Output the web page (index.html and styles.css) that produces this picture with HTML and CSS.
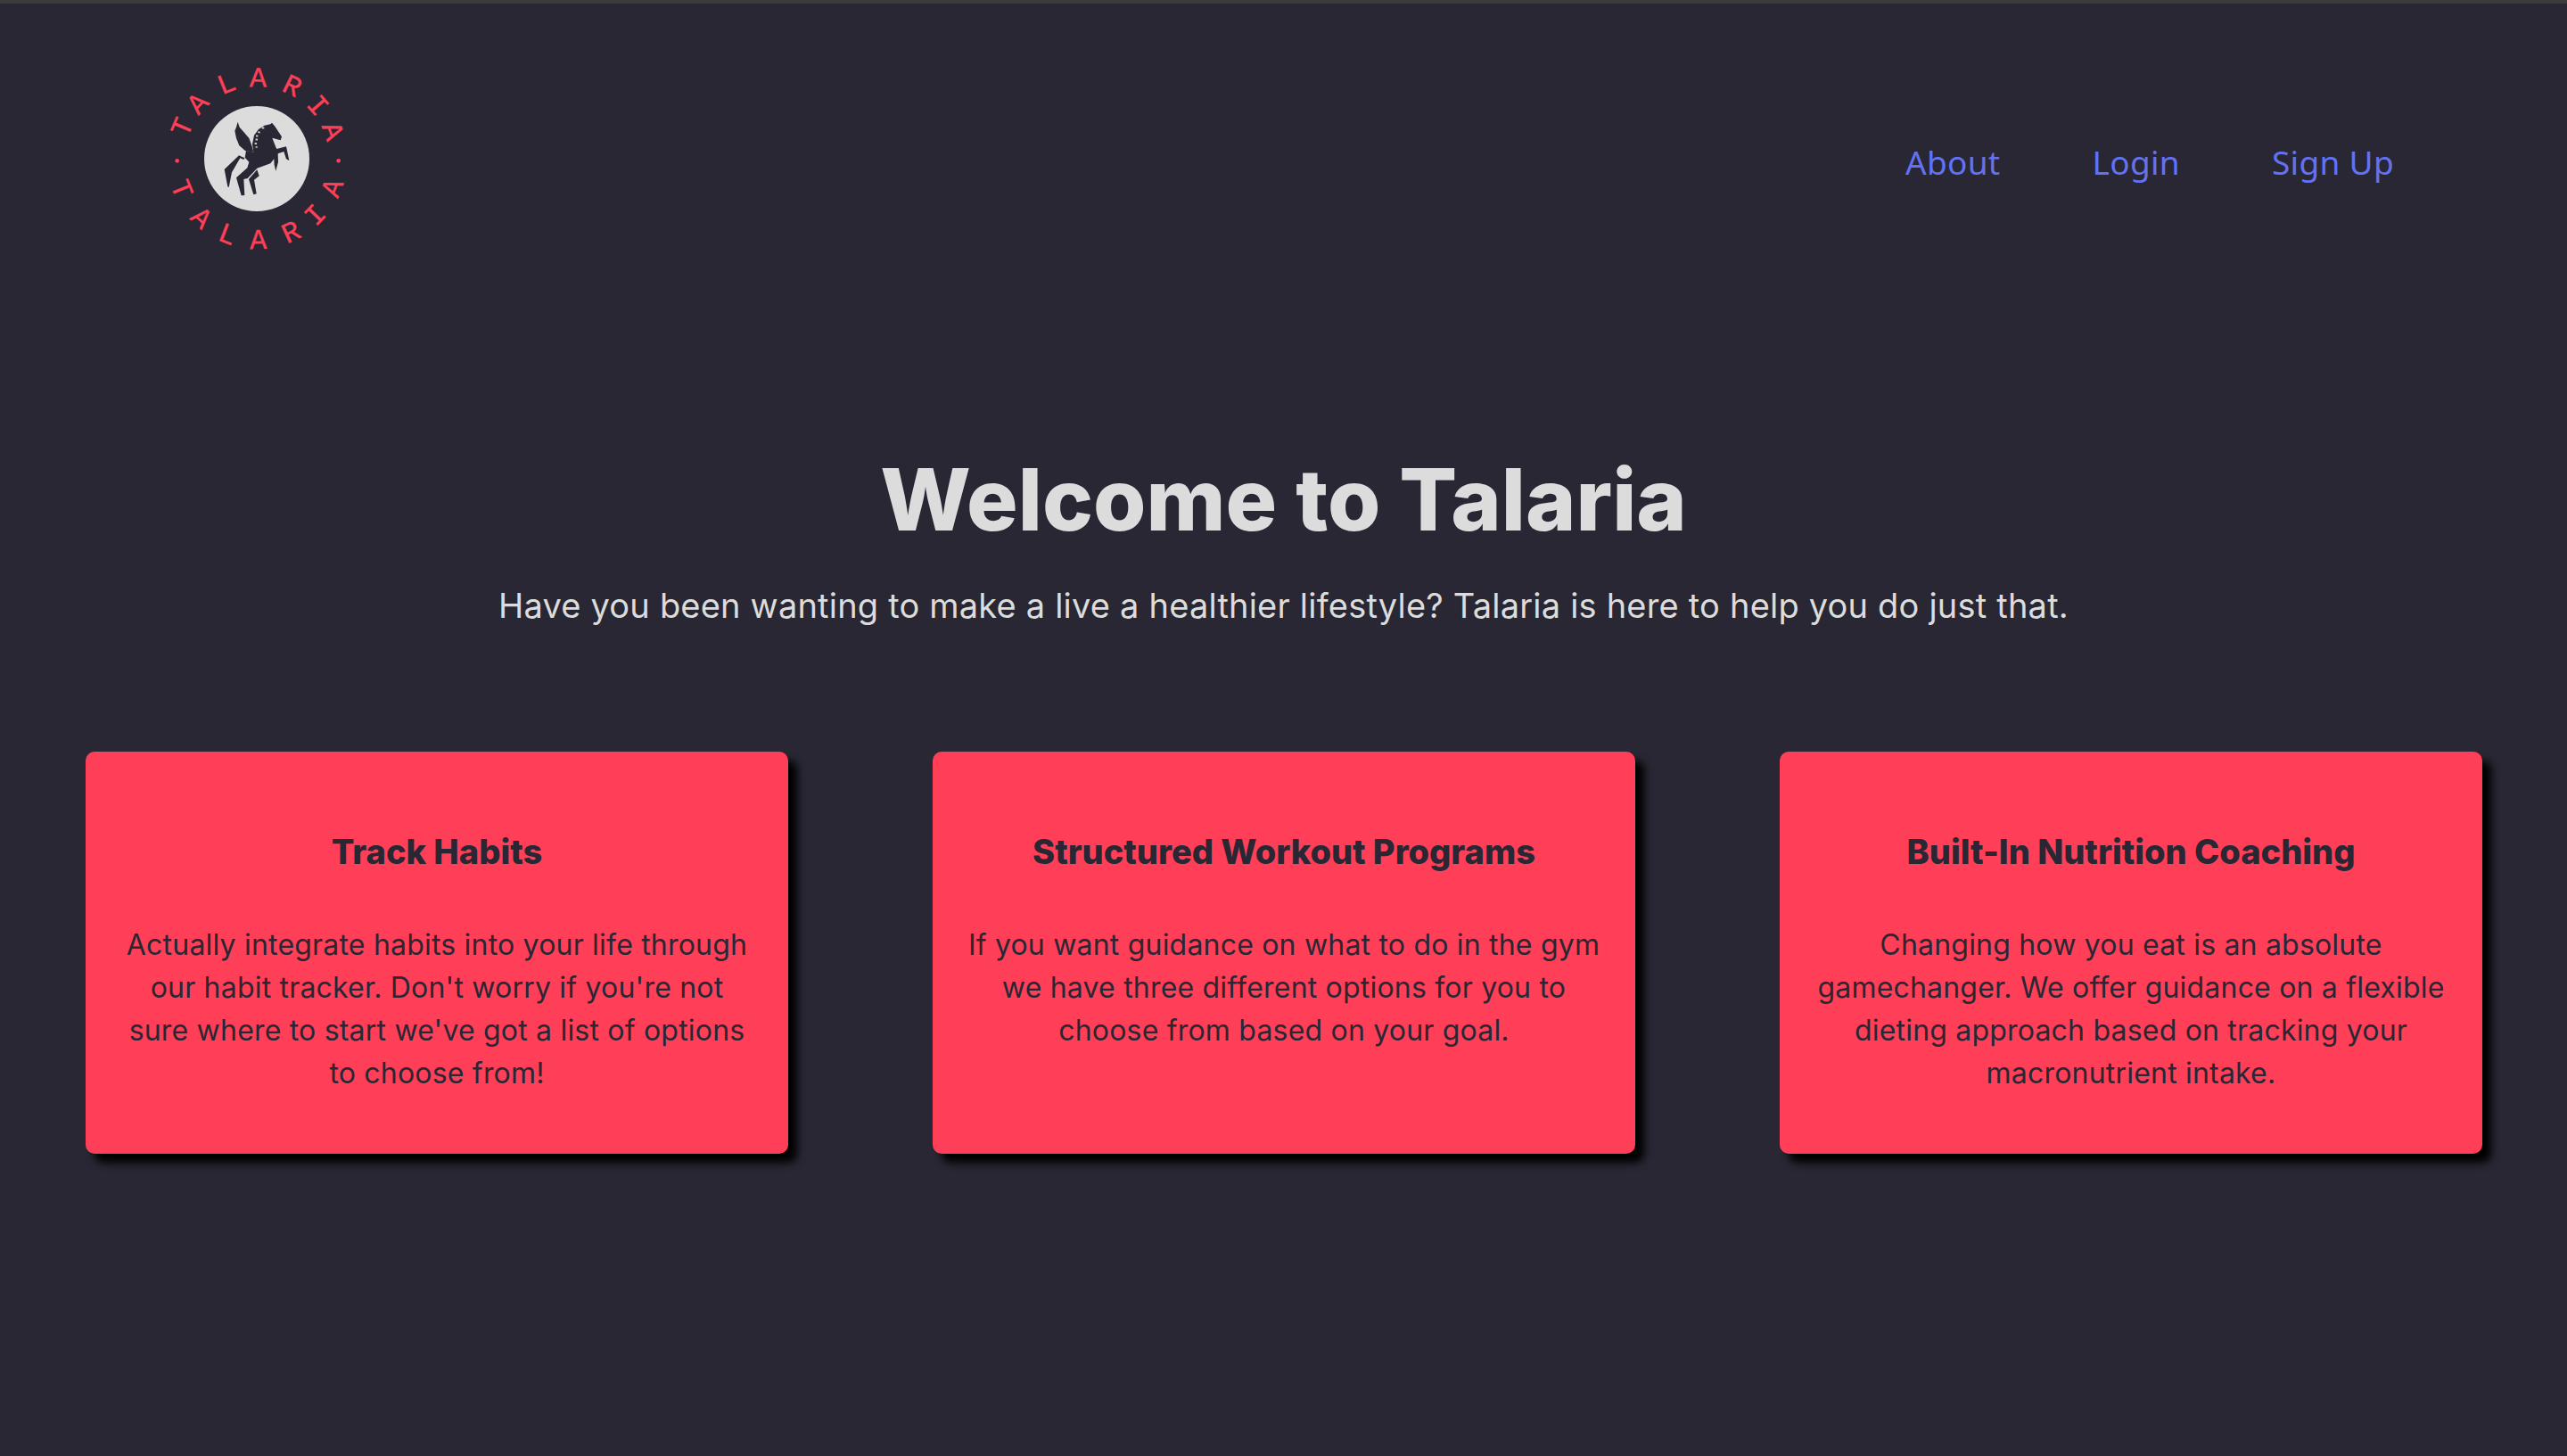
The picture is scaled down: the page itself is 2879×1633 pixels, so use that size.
FILE: index.html
```html
<!DOCTYPE html>
<html lang="en">
<head>
  <meta charset="UTF-8" />
  <title>Talaria</title>
  <link rel="stylesheet" href="styles.css">
</head>
<body>
  <header class="topnav">
    <a class="logo" href="#">
      <svg class="logo-mark" viewBox="0 0 810 780" width="270" height="260">
        <circle class="logo-disc" cx="414" cy="384" r="177" />
        <circle class="logo-dot" cx="146" cy="391" r="7" />
        <circle class="logo-dot" cx="689" cy="391" r="7" />
        <!-- top arc -->
        <text class="logo-letter" x="414" y="142" transform="rotate(-67 414 384)">T</text>
        <text class="logo-letter" x="414" y="142" transform="rotate(-47 414 384)">A</text>
        <text class="logo-letter" x="414" y="142" transform="rotate(-22 414 384)">L</text>
        <text class="logo-letter" x="414" y="142" transform="rotate(1 414 384)">A</text>
        <text class="logo-letter" x="414" y="142" transform="rotate(26 414 384)">R</text>
        <text class="logo-letter" x="414" y="142" transform="rotate(49 414 384)">I</text>
        <text class="logo-letter" x="414" y="142" transform="rotate(70 414 384)">A</text>
        <!-- bottom arc -->
        <text class="logo-letter" x="414" y="687" transform="rotate(68 414 384)">T</text>
        <text class="logo-letter" x="414" y="687" transform="rotate(43 414 384)">A</text>
        <text class="logo-letter" x="414" y="687" transform="rotate(21 414 384)">L</text>
        <text class="logo-letter" x="414" y="687" transform="rotate(-1 414 384)">A</text>
        <text class="logo-letter" x="414" y="687" transform="rotate(-25 414 384)">R</text>
        <text class="logo-letter" x="414" y="687" transform="rotate(-46 414 384)">I</text>
        <text class="logo-letter" x="414" y="687" transform="rotate(-69 414 384)">A</text>
        <!-- pegasus -->
        <g transform="translate(270 210)">
          <path class="logo-horse" d="M80 50 L86 68 L100 84 L118 105 L127 130 L133 152 L105 147 L85 130 L75 105 L70 80 L75 68 Z" />
          <path class="logo-horse" d="M84 163 L103 172 L100 177 L88 172 L60 220 L50 270 L46 268 L35 210 Z" />
          <path class="logo-horse" d="M133 152 L129 125 L135 95 L150 75 L170 62 L190 58 L195 53 L205 65 L228 100 L224 112 L196 104 L208 135 L211 141 L243 133 L253 180 L243 175 L235 150 L215 157 L216 185 L208 215 L203 195 L202 175 L190 190 L145 206 L113 240 L100 243 L103 297 L92 298 L75 238 L112 205 L118 185 L104 170 L108 147 Z" />
          <path class="logo-horse" d="M145 211 L152 232 L135 245 L143 292 L133 295 L117 243 Z" />
          <path class="logo-neck" d="M161 71 L169 70 M148 84 L155 86 M141 97 L148 98 M140 109 L147 110 M137 122 L144 124 M140 135 L146 135" />
        </g>
      </svg>
    </a>
    <nav class="nav-links">
      <a href="#">About</a>
      <a href="#">Login</a>
      <a href="#">Sign Up</a>
    </nav>
  </header>

  <section class="hero">
    <h1>Welcome to Talaria</h1>
    <p>Have you been wanting to make a live a healthier lifestyle? Talaria is here to help you do just that.</p>
  </section>

  <section class="features">
    <div class="card">
      <h3>Track Habits</h3>
      <p>Actually integrate habits into your life through our habit tracker. Don't worry if you're not sure where to start we've got a list of options to choose from!</p>
    </div>
    <div class="card">
      <h3>Structured Workout Programs</h3>
      <p>If you want guidance on what to do in the gym we have three different options for you to choose from based on your goal.</p>
    </div>
    <div class="card">
      <h3>Built-In Nutrition Coaching</h3>
      <p>Changing how you eat is an absolute gamechanger. We offer guidance on a flexible dieting approach based on tracking your macronutrient intake.</p>
    </div>
  </section>
</body>
</html>
```

FILE: styles.css
```css
:root {
  --bg: #282733;
  --red: #ff3f58;
  --light: #dcdcdc;
  --blue: #6272f2;
}
* {
  box-sizing: border-box;
}
body {
  margin: 0;
  min-height: 100vh;
  background: var(--bg);
  border-top: 4px solid #3c3c3c;
  font-family: 'Inter', 'Liberation Sans', sans-serif;
  color: var(--light);
}
.topnav {
  display: flex;
  align-items: center;
  justify-content: space-between;
  padding: 46px 194px 0 150px;
  height: 306px;
}
.logo {
  display: block;
  height: 260px;
}
.logo-mark {
  display: block;
}
.logo-disc {
  fill: var(--light);
}
.logo-dot {
  fill: var(--red);
}
.logo-letter {
  fill: var(--red);
  stroke: var(--red);
  stroke-width: 1;
  font-family: 'Liberation Mono', monospace;
  font-size: 96px;
  text-anchor: middle;
}
.logo-horse {
  fill: var(--bg);
}
.logo-neck {
  fill: none;
  stroke: var(--light);
  stroke-width: 5;
}
.nav-links {
  display: flex;
  gap: 103px;
  margin-top: 3px;
}
.nav-links a {
  color: var(--blue);
  font-family: 'Noto Sans', sans-serif;
  font-size: 37px;
  letter-spacing: 0.3px;
  text-decoration: none;
}
.hero {
  text-align: center;
  padding-top: 195px;
}
.hero h1 {
  margin: 0;
  font-size: 96px;
  line-height: 110px;
  font-weight: 800;
}
.hero p {
  margin: 40px 0 0;
  font-size: 38px;
  letter-spacing: 0.2px;
  line-height: 48px;
}
.features {
  display: grid;
  grid-template-columns: repeat(3, 788px);
  justify-content: space-between;
  padding: 0 95px 0 96px;
  margin-top: 140px;
}
.card {
  height: 451px;
  padding: 88px 36px 0;
  background: var(--red);
  color: var(--bg);
  border-radius: 10px;
  box-shadow: 10px 10px 10px #000;
  text-align: center;
}
.card h3 {
  margin: 0;
  font-size: 38px;
  line-height: 48px;
  font-weight: 800;
}
.card p {
  margin: 57px 0 0;
  font-size: 32px;
  letter-spacing: 0.2px;
  line-height: 48px;
}
```
